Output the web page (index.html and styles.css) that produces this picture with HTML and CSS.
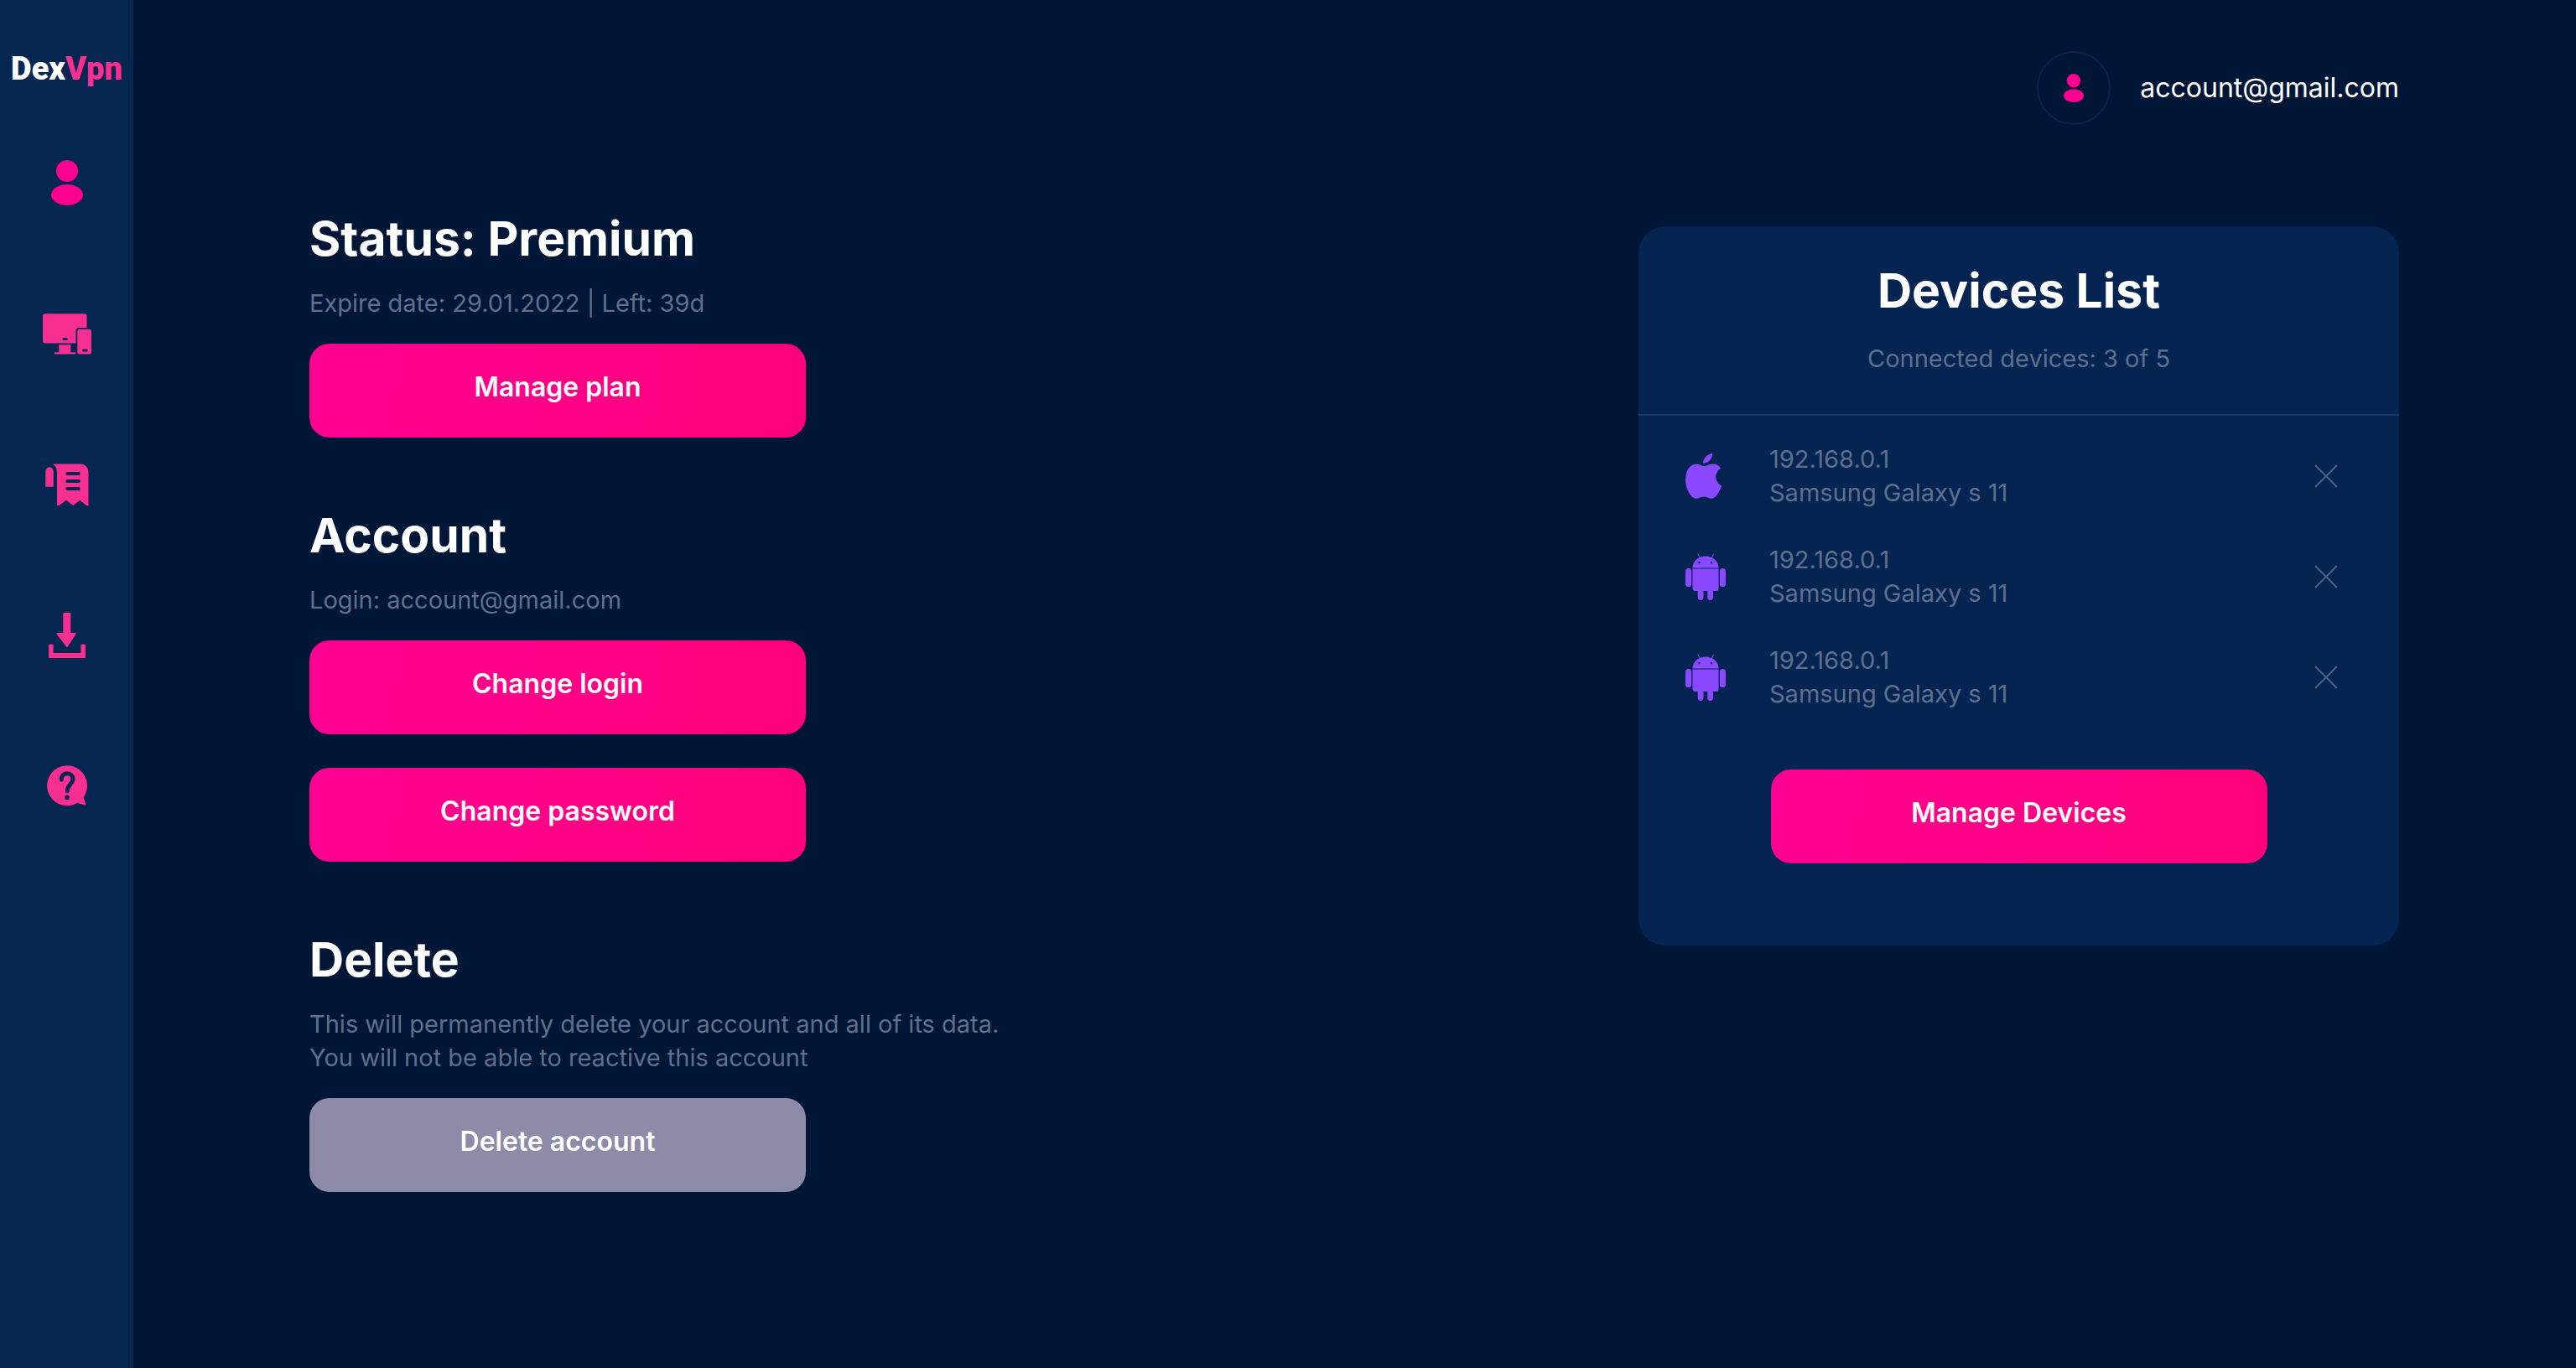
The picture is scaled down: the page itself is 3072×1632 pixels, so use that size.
FILE: index.html
```html
<!DOCTYPE html>
<html lang="en">
<head>
<meta charset="utf-8">
<meta name="viewport" content="width=device-width, initial-scale=1">
<title>DexVpn – Account</title>
<link rel="stylesheet" href="styles.css">
</head>
<body>
<svg class="sprite" aria-hidden="true">
  <symbol id="user" viewBox="0 0 38 54">
    <circle cx="19" cy="13" r="13"/>
    <ellipse cx="19" cy="41.500" rx="19" ry="12.500"/>
  </symbol>
  <symbol id="android" viewBox="0 0 48 56">
    <path d="M8.500 17.500a15.500 14 0 0 1 31 0z"/>
    <path d="M15 1l2.500 5M33.500 1l-2.500 5" fill="none" stroke="currentColor" stroke-width="1" stroke-linecap="round"/>
    <path d="M8.500 18.600h31V42a3 3 0 0 1-3 3H33v7.700a3.300 3.300 0 0 1-6.800 0V45h-4.700v7.700a3.300 3.300 0 0 1-6.800 0V45h-3.200a3 3 0 0 1-3-3z"/>
    <rect x="0" y="18" width="7.200" height="22" rx="3.600"/>
    <rect x="40.800" y="18" width="7.200" height="22" rx="3.600"/>
    <circle cx="16.500" cy="11" r="1.200" class="cut"/>
    <circle cx="31" cy="11" r="1.200" class="cut"/>
  </symbol>
  <symbol id="cross" viewBox="0 0 28 28">
    <path d="M1 1l26 26M27 1L1 27" fill="none" stroke="currentColor" stroke-width="2"/>
  </symbol>
</svg>

<div class="app">
  <aside class="sidebar">
    <a class="logo" href="#">Dex<span class="logo-accent">Vpn</span></a>
    <nav class="nav" aria-label="Main">
      <a class="nav-link active" href="#" aria-label="Account">
        <svg class="user-icon"><use href="#user"/></svg>
      </a>
      <a class="nav-link" href="#" aria-label="Devices">
        <svg class="nav-icon" viewBox="0 0 60 60">
          <path d="M4 6.200h46.500a3 3 0 0 1 3 3V23H44a3.500 3.500 0 0 0-3.500 3.500v15H4a3 3 0 0 1-3-3V9.200a3 3 0 0 1 3-3z"/>
          <path d="M20.300 43.200h14v9H40v2.300H15v-2.300h5.300z"/>
          <rect x="42.300" y="24.700" width="16.700" height="29.800" rx="2.500"/>
          <path class="cut-line" d="M26 36.500h3M49.500 50h3.500"/>
        </svg>
      </a>
      <a class="nav-link" href="#" aria-label="Billing">
        <svg class="nav-icon" viewBox="0 0 60 60">
          <path d="M12.500 5.500H46a9.500 9.500 0 0 1 9.500 9.500v40.300h-2L45.300 48.700 37 55l-8-6.300-8.300 6.300H18V16c0-5-1.500-8.500-5.500-10.500z"/>
          <path d="M4.300 14.500a4.700 5.200 0 0 1 9.400 0v18.200H4.300z"/>
          <path class="cut-line wide" d="M30.300 17h13.500M30.300 26h13.500M30.300 35h13.500"/>
        </svg>
      </a>
      <a class="nav-link" href="#" aria-label="Downloads">
        <svg class="nav-icon" viewBox="0 0 60 60">
          <path d="M26.300 3h7a1 1 0 0 1 1 1v23h5c1 0 1.500 1 .8 2L30.800 43.600q-.8 1-1.600 0L17.900 29c-.7-1-.2-2 .8-2h6.600V4a1 1 0 0 1 1-1z"/>
          <path d="M9 40.700h4.600V51h32.800V40.700H51a1 1 0 0 1 1 1V56a1 1 0 0 1-1 1H9a1 1 0 0 1-1-1V41.700a1 1 0 0 1 1-1z"/>
        </svg>
      </a>
      <a class="nav-link" href="#" aria-label="Help">
        <svg class="nav-icon" viewBox="0 0 60 60">
          <path d="M30 5.300a24 24 0 0 1 19.500 38c.8 2.500 1.800 5 2.700 7.500.3 1-.3 1.600-1.300 1.400l-8.700-2.200A24 24 0 1 1 30 5.300z"/>
          <path class="cut-line question" d="M23.300 22c0-5 3-7.300 7-7.300 4.200 0 6.700 3 6.700 6.500 0 6-6.800 7-6.800 14.300"/>
          <circle class="cut" cx="30" cy="43.300" r="2.800"/>
        </svg>
      </a>
    </nav>
  </aside>

  <div class="page">
    <header class="topbar">
      <span class="avatar"><svg class="avatar-icon"><use href="#user"/></svg></span>
      <span class="email">account@gmail.com</span>
    </header>

    <main class="content">
      <div class="settings">
        <section class="section">
          <h2 class="title">Status: Premium</h2>
          <p class="text">Expire date: 29.01.2022 | Left: 39d</p>
          <div class="actions">
            <button class="button" type="button">Manage plan</button>
          </div>
        </section>
        <section class="section">
          <h2 class="title">Account</h2>
          <p class="text">Login: account@gmail.com</p>
          <div class="actions">
            <button class="button" type="button">Change login</button>
            <button class="button" type="button">Change password</button>
          </div>
        </section>
        <section class="section">
          <h2 class="title">Delete</h2>
          <p class="text">This will permanently delete your account and all of its data.<br>You will not be able to reactive this account</p>
          <div class="actions">
            <button class="button muted" type="button">Delete account</button>
          </div>
        </section>
      </div>

      <section class="card">
        <header class="card-head">
          <h2 class="title">Devices List</h2>
          <p class="text">Connected devices: 3 of 5</p>
        </header>
        <ul class="devices">
          <li class="device">
            <svg class="device-icon" viewBox="0 0 48 56">
              <path d="M32 1C32.500 7 27.500 12.800 21.300 12.800 20.300 7.500 26 1.500 32 1z"/>
              <path d="M22 16.200c3.500 0 6-2.600 11-2.600 3.500 0 7 1.600 9 5.200-8.500 5-7.200 17.200 1.200 20.700C41 46 36.500 54.500 31.300 54.700c-3.500 0-5-2-9.300-2-4.500 0-6 2-9.300 2C6.500 54.700 0 43 0 32.300 0 19.500 7 13.700 13 13.600c4 0 6.500 2.600 9 2.600z"/>
            </svg>
            <p class="text">192.168.0.1<br>Samsung Galaxy s 11</p>
            <button class="remove" type="button" aria-label="Remove device"><svg class="cross"><use href="#cross"/></svg></button>
          </li>
          <li class="device">
            <svg class="device-icon"><use href="#android"/></svg>
            <p class="text">192.168.0.1<br>Samsung Galaxy s 11</p>
            <button class="remove" type="button" aria-label="Remove device"><svg class="cross"><use href="#cross"/></svg></button>
          </li>
          <li class="device">
            <svg class="device-icon"><use href="#android"/></svg>
            <p class="text">192.168.0.1<br>Samsung Galaxy s 11</p>
            <button class="remove" type="button" aria-label="Remove device"><svg class="cross"><use href="#cross"/></svg></button>
          </li>
        </ul>
        <button class="button" type="button">Manage Devices</button>
      </section>
    </main>
  </div>
</div>
</body>
</html>
```

FILE: styles.css
```css
:root {
  --bg: #001637;
  --sidebar: #052650;
  --card: #052452;
  --pink: #ff0090;
  --pink-soft: #f72f90;
  --purple: #8a48ff;
  --muted: #5f708c;
}

* {
  box-sizing: border-box;
}

body,
h2,
p,
ul {
  margin: 0;
  padding: 0;
}

body {
  background: var(--bg);
  color: #fff;
  font-family: Inter, "Liberation Sans", sans-serif;
}

a {
  color: inherit;
  text-decoration: none;
}

svg {
  display: block;
  fill: currentColor;
}

.sprite {
  display: none;
}

.app {
  display: flex;
  min-height: 100vh;
}

/* Sidebar */
.sidebar {
  flex: none;
  display: flex;
  flex-direction: column;
  align-items: center;
  gap: 86px;
  width: 159px;
  padding: 62px 0;
  background: var(--sidebar);
}

.logo {
  font: 900 38px/40px Roboto, sans-serif;
}

.logo-accent {
  color: var(--pink-soft);
}

.nav {
  display: flex;
  flex-direction: column;
  gap: 120px;
}

.nav-link {
  display: grid;
  place-items: center;
  width: 60px;
  height: 60px;
  color: var(--pink-soft);
}

.nav-link.active {
  color: var(--pink);
}

.nav-icon {
  width: 60px;
  height: 60px;
}

.user-icon {
  width: 38px;
  height: 54px;
}

.cut {
  fill: var(--sidebar);
}

.cut-line {
  fill: none;
  stroke: var(--sidebar);
  stroke-width: 3;
  stroke-linecap: round;
}

.cut-line.wide {
  stroke-width: 4;
}

.cut-line.question {
  stroke-width: 5;
}

/* Page */
.page {
  flex: 1;
  min-width: 0;
  padding: 61px 211px 60px 210px;
}

.topbar {
  display: flex;
  align-items: center;
  justify-content: flex-end;
  gap: 35px;
}

.avatar {
  display: grid;
  place-items: center;
  width: 88px;
  height: 88px;
  border: 2px solid #08234c;
  border-radius: 50%;
  color: var(--pink);
}

.avatar-icon {
  width: 24px;
  height: 34px;
}

.email {
  font-size: 32px;
  line-height: 40px;
}

.content {
  display: flex;
  flex-wrap: wrap;
  align-items: flex-start;
  justify-content: space-between;
  gap: 80px;
  margin-top: 100px;
}

.settings {
  display: flex;
  flex-direction: column;
  gap: 81px;
}

.title {
  font-size: 57px;
  font-weight: 700;
  line-height: 72px;
}

.text {
  color: var(--muted);
  font-size: 29px;
  font-weight: 400;
  line-height: 40px;
}

.section .text {
  margin: 21px 0 28px;
}

.actions {
  display: flex;
  flex-direction: column;
  gap: 40px;
}

.button {
  width: 592px;
  max-width: 100%;
  height: 112px;
  padding: 0 0 8px;
  border: 0;
  border-radius: 24px;
  background: linear-gradient(100deg, #ff0092, #ff007a);
  color: #fff;
  font: 600 32px/40px Inter, sans-serif;
  cursor: pointer;
}

.button.muted {
  background: #8d8ba7;
}

/* Devices card */
.card {
  display: flex;
  flex-direction: column;
  align-items: center;
  flex: 0 1 907px;
  margin-top: 21px;
  padding-bottom: 98px;
  border-radius: 32px;
  background: var(--card);
}

.card-head {
  align-self: stretch;
  padding: 41px 0 46px;
  border-bottom: 2px solid #18386a;
  text-align: center;
}

.card-head .text {
  margin-top: 25px;
}

.devices {
  align-self: stretch;
  display: flex;
  flex-direction: column;
  gap: 40px;
  padding: 32px 61px 70px 56px;
  list-style: none;
}

.device {
  display: flex;
  align-items: center;
  gap: 52px;
}

.device-icon {
  flex: none;
  width: 48px;
  height: 56px;
  color: var(--purple);
}

.remove {
  display: grid;
  place-items: center;
  width: 52px;
  height: 52px;
  margin-left: auto;
  padding: 0;
  border: 0;
  background: none;
  color: #4a6187;
  cursor: pointer;
}

.cross {
  width: 28px;
  height: 28px;
}
```
